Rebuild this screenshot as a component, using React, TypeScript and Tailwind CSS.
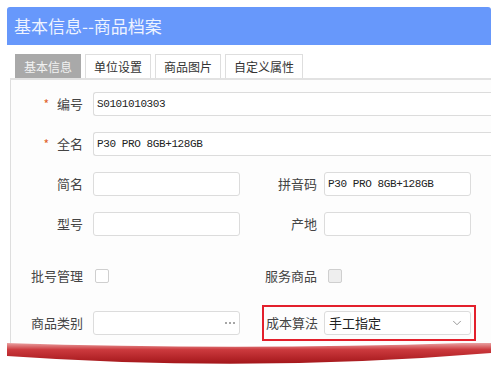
import { ChevronDown } from 'lucide-react';

const cjk = { fontFamily: '"Noto Sans CJK SC", "Noto Sans", sans-serif' };
const mono = { fontFamily: '"Liberation Mono", "Noto Sans CJK SC", monospace' };

const Label = ({ text, star = false, className = '' }: { text: string; star?: boolean; className?: string }) => (
  <div className={`flex items-center justify-end whitespace-nowrap text-[13px] text-[#444] ${className}`}>
    {star && <span className="text-[#e0622a] text-[12px] mr-[8px] leading-none">*</span>}
    {text}
  </div>
);

const Input = ({ value = '', className = '' }: { value?: string; className?: string }) => (
  <div
    className={`h-[24px] bg-white border border-[#dcdcdc] rounded-[3px] flex items-center px-[3px] text-[11px] tracking-[-0.4px] text-[#222] ${className}`}
    style={mono}
  >
    {value}
  </div>
);

const Checkbox = ({ disabled = false }: { disabled?: boolean }) => (
  <div
    className={`w-[14px] h-[14px] rounded-[2px] border border-[#cfcfcf] ${disabled ? 'bg-[#eeeeee]' : 'bg-white'}`}
  />
);

export default function App() {
  const tabs = ['基本信息', '单位设置', '商品图片', '自定义属性'];

  return (
    <div className="w-[500px] h-[372px] bg-white overflow-hidden" style={cjk}>
      {/* header */}
      <div className="ml-[7px] mt-[7px] w-[484px] h-[38px] bg-[#6798fb] rounded-t-[3px] flex items-center pl-[7px] text-[17px] text-[#eef3ff]">
        基本信息--商品档案
      </div>

      {/* tabs */}
      <div className="ml-[10px] mt-[11px] w-[481px] h-[24px] flex items-end gap-[4px] pl-[5px] border-b-2 border-[#e2e2e2]">
        {tabs.map((t, i) => (
          <div
            key={t}
            className={`h-[24px] px-[8px] flex items-center text-[12px] border border-b-0 ${
              i === 0 ? 'bg-[#a9a9a9] text-[#f2f2f2] border-[#a9a9a9]' : 'bg-white text-[#333] border-[#dedede]'
            }`}
          >
            {t}
          </div>
        ))}
      </div>

      {/* form panel */}
      <div className="ml-[10px] w-[481px] h-[263px] border-l border-[#dedede] bg-[#fdfdfd] flex flex-col">
        <div className="mt-[12px] flex items-center">
          <Label text="编号" star className="w-[72px]" />
          <Input value="S0101010303" className="ml-[10px] flex-1 border-r-0 rounded-r-none" />
        </div>
        <div className="mt-[16px] flex items-center">
          <Label text="全名" star className="w-[72px]" />
          <Input value="P30 PRO 8GB+128GB" className="ml-[10px] flex-1 border-r-0 rounded-r-none" />
        </div>
        <div className="mt-[16px] flex items-center">
          <Label text="简名" className="w-[72px]" />
          <Input className="ml-[10px] w-[147px]" />
          <Label text="拼音码" className="w-[77px]" />
          <Input value="P30 PRO 8GB+128GB" className="ml-[7px] w-[147px]" />
        </div>
        <div className="mt-[16px] flex items-center">
          <Label text="型号" className="w-[72px]" />
          <Input className="ml-[10px] w-[147px]" />
          <Label text="产地" className="w-[77px]" />
          <Input className="ml-[7px] w-[147px]" />
        </div>
        <div className="mt-[28px] h-[24px] flex items-center">
          <Label text="批号管理" className="w-[72px]" />
          <div className="ml-[12px] w-[145px]">
            <Checkbox />
          </div>
          <Label text="服务商品" className="w-[77px]" />
          <div className="ml-[11px]">
            <Checkbox disabled />
          </div>
        </div>
        <div className="mt-[17px] flex items-center">
          <Label text="商品类别" className="w-[72px]" />
          <div className="ml-[10px] w-[147px] h-[24px] bg-white border border-[#dcdcdc] rounded-[3px] flex items-center justify-end pr-[4px] gap-[2px]">
            <span className="w-[2px] h-[2px] rounded-full bg-[#888]" />
            <span className="w-[2px] h-[2px] rounded-full bg-[#888]" />
            <span className="w-[2px] h-[2px] rounded-full bg-[#888]" />
          </div>
          <div className="ml-[22px] w-[214px] h-[36px] border-2 border-[#e3202c] flex items-center pl-[2px]">
            <Label text="成本算法" className="w-[52px]" />
            <div className="ml-[6px] w-[147px] h-[24px] bg-white border border-[#dcdcdc] rounded-[3px] flex items-center justify-between pl-[4px] pr-[6px] text-[13px] text-[#222]">
              手工指定
              <ChevronDown size={14} strokeWidth={1.5} color="#8a8a8a" />
            </div>
          </div>
        </div>
      </div>

      {/* page curl swoosh */}
      <svg width="500" height="24" viewBox="0 343 500 24" className="block">
        <defs>
          <linearGradient id="sw" x1="0" y1="0" x2="0" y2="1">
            <stop offset="0" stopColor="#eeb0b0" />
            <stop offset="0.35" stopColor="#cc3a3e" />
            <stop offset="1" stopColor="#a3161a" />
          </linearGradient>
        </defs>
        <path
          d="M7 343 Q250 351 491 342 L491 353 Q250 373 7 356 Z"
          fill="url(#sw)"
        />
      </svg>
    </div>
  );
}
